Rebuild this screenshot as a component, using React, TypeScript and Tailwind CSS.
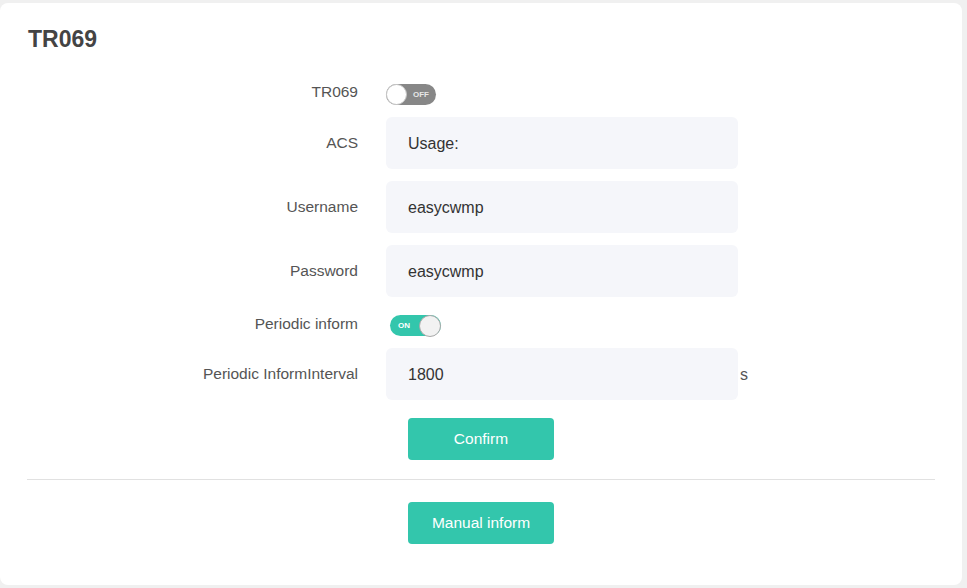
import React from "react";

function Switch({ on }: { on: boolean }) {
  if (on) {
    return (
      <div className="flex h-[21px] w-[51px] items-center justify-between rounded-full bg-[#33c6ac] pl-[8px]">
        <span className="text-[8px] font-bold leading-none text-white">ON</span>
        <span className="h-[22px] w-[22px] rounded-full border border-[#a9a9a9] bg-[#f2f2f2]" />
      </div>
    );
  }
  return (
    <div className="flex h-[21px] w-[50px] items-center rounded-full bg-[#878787]">
      <span className="h-[21px] w-[21px] rounded-full border border-[#c8c8c8] bg-white" />
      <span className="ml-[6px] text-[8px] font-bold leading-none text-[#e6e6e6]">OFF</span>
    </div>
  );
}

function Label({ children, className = "" }: { children: React.ReactNode; className?: string }) {
  return (
    <div className={"w-[358px] shrink-0 text-right text-[15.5px] leading-[20px] text-[#555] " + className}>
      {children}
    </div>
  );
}

function Field({ value }: { value: string }) {
  return (
    <div className="ml-[28px] flex h-[52px] w-[352px] items-center rounded-[6px] bg-[#f5f6fa] px-[22px] pt-[2px] text-[16px] text-[#333]">
      {value}
    </div>
  );
}

export default function App() {
  return (
    <div
      className="min-h-screen bg-[#f0f0f0] pt-[3px]"
      style={{ fontFamily: '"Liberation Sans", Arial, sans-serif' }}
    >
      <div className="h-[582px] w-[962px] rounded-[8px] bg-white pt-[24px]">
        <h1 className="pl-[28px] text-[23px] font-bold leading-[24px] text-[#444]">TR069</h1>

        <div className="mt-[33px] flex h-[21px] items-center">
          <Label className="pb-[5px]">TR069</Label>
          <div className="ml-[28px]">
            <Switch on={false} />
          </div>
        </div>

        <div className="mt-[12px] flex items-center">
          <Label>ACS</Label>
          <Field value="Usage:" />
        </div>

        <div className="mt-[12px] flex items-center">
          <Label>Username</Label>
          <Field value="easycwmp" />
        </div>

        <div className="mt-[12px] flex items-center">
          <Label>Password</Label>
          <Field value="easycwmp" />
        </div>

        <div className="mt-[18px] flex h-[21px] items-center">
          <Label className="pb-[4px]">Periodic inform</Label>
          <div className="ml-[32px]">
            <Switch on={true} />
          </div>
        </div>

        <div className="mt-[12px] flex items-center">
          <Label>Periodic InformInterval</Label>
          <Field value="1800" />
          <span className="ml-[2px] pt-[2px] text-[16px] text-[#555]">s</span>
        </div>

        <button className="ml-[408px] mt-[18px] flex h-[42px] w-[146px] items-center justify-center rounded-[4px] bg-[#33c6ac] text-[15.5px] text-white">
          Confirm
        </button>

        <div className="mx-[27px] mt-[19px] h-px w-[908px] bg-[#e1e1e1]" />

        <button className="ml-[408px] mt-[22px] flex h-[42px] w-[146px] items-center justify-center rounded-[4px] bg-[#33c6ac] text-[15.5px] text-white">
          Manual inform
        </button>
      </div>
    </div>
  );
}
